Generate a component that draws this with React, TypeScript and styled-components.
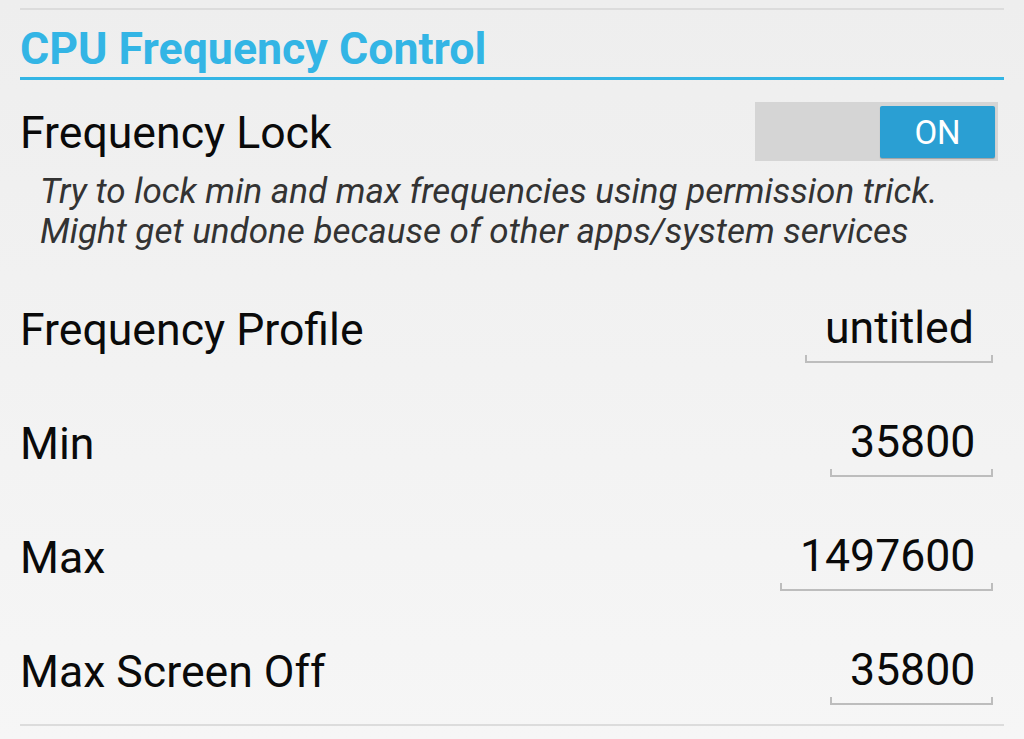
import styled, { createGlobalStyle } from "styled-components";

const GlobalStyle = createGlobalStyle`
  html, body {
    margin: 0;
    padding: 0;
  }
  body {
    width: 1024px;
    height: 739px;
    overflow: hidden;
    background: linear-gradient(to bottom, #eeeeee 0%, #f6f6f6 100%);
    font-family: Roboto, "Noto Sans", "Liberation Sans", sans-serif;
  }
`;

const Page = styled.div`
  display: flex;
  flex-direction: column;
  padding: 8px 20px 0;
`;

const Rule = styled.div<{ $color?: string; $thick?: number }>`
  height: ${(p) => p.$thick ?? 2}px;
  background: ${(p) => p.$color ?? "#dcdcdc"};
`;

const SectionTitle = styled.h2`
  margin: 17px 0 5px;
  font-size: 44.7px;
  line-height: 45px;
  font-weight: 700;
  color: #33b5e5;
`;

const SwitchRow = styled.div`
  display: flex;
  align-items: center;
  justify-content: space-between;
  margin-top: 22px;
  height: 59px;
`;

const Label = styled.div`
  font-size: 44.6px;
  line-height: 44px;
  color: #0a0a0a;
  padding-top: 2px;
`;

const Track = styled.div`
  display: flex;
  justify-content: flex-end;
  width: 243px;
  height: 59px;
  box-sizing: border-box;
  padding: 4px 3px 3px;
  margin-right: 6px;
  background: #d5d5d5;
`;

const Thumb = styled.div`
  width: 115px;
  display: flex;
  align-items: center;
  justify-content: center;
  background: #2a9fd3;
  border-radius: 2px;
  box-shadow: 0 1px 1px rgba(0, 0, 0, 0.25);
  color: #ffffff;
  font-size: 33px;
`;

const Description = styled.p`
  margin: 11px 0 0 20px;
  font-size: 35px;
  line-height: 40px;
  font-style: italic;
  color: #333333;
`;

const List = styled.div`
  display: flex;
  flex-direction: column;
  gap: 20px;
  margin-top: 36px;
`;

const SettingRow = styled.div`
  display: flex;
  align-items: flex-start;
  justify-content: space-between;
  height: 94px;
  padding-top: 18px;
  box-sizing: border-box;
`;

const Field = styled.div<{ $width: number }>`
  position: relative;
  width: ${(p) => p.$width}px;
  box-sizing: border-box;
  margin-right: 11px;
  padding: 0 21px 13px 20px;
  text-align: right;
  font-size: 44.6px;
  line-height: 44px;
  color: #0a0a0a;

  &::after {
    content: "";
    position: absolute;
    left: 0;
    right: 0;
    bottom: 0;
    height: 6px;
    border: 2px solid #bdbdbd;
    border-top: none;
  }
`;

const settings = [
  { label: "Frequency Profile", value: "untitled", width: 188 },
  { label: "Min", value: "35800", width: 163 },
  { label: "Max", value: "1497600", width: 213 },
  { label: "Max Screen Off", value: "35800", width: 163 },
];

export default function App() {
  return (
    <>
      <GlobalStyle />
      <Page>
        <Rule />
        <SectionTitle>CPU Frequency Control</SectionTitle>
        <Rule $color="#33b5e5" $thick={3} />
        <SwitchRow>
          <Label>Frequency Lock</Label>
          <Track>
            <Thumb>ON</Thumb>
          </Track>
        </SwitchRow>
        <Description>
          Try to lock min and max frequencies using permission trick.
          <br />
          Might get undone because of other apps/system services
        </Description>
        <List>
          {settings.map((s) => (
            <SettingRow key={s.label}>
              <Label>{s.label}</Label>
              <Field $width={s.width}>{s.value}</Field>
            </SettingRow>
          ))}
        </List>
        <Rule />
      </Page>
    </>
  );
}
